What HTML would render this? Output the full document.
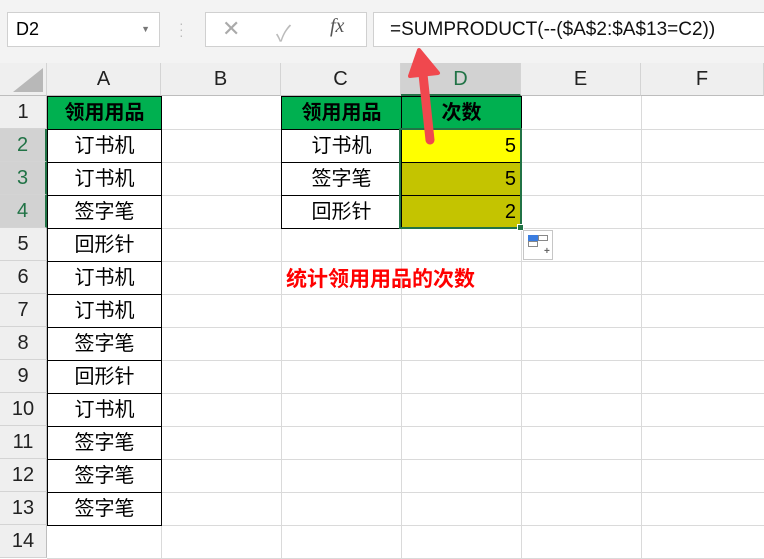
<!DOCTYPE html><html><head><meta charset="utf-8"><style>
body{margin:0;width:764px;height:559px;overflow:hidden;background:#fff;font-family:"Liberation Sans","Noto Sans CJK SC",sans-serif;position:relative}
div{position:absolute;box-sizing:border-box}
.top{left:0;top:0;width:764px;height:63px;background:#f3f3f3}
.ch{top:63px;height:33px;background:#efefef;border-right:1px solid #d4d4d4;border-bottom:1px solid #bdbdbd;font-size:20px;text-align:center;line-height:33px;color:#222}
.rh{left:0;width:47px;height:33px;background:#efefef;border-bottom:1px solid #d4d4d4;border-right:1px solid #bdbdbd;font-size:20px;text-align:center;line-height:33px;color:#222}
.gv{top:96px;width:1px;height:463px;background:#dadada}
.gh{left:47px;width:717px;height:1px;background:#dadada}
.c{height:34px;border:1px solid #000;font-size:20px;text-align:center;line-height:32px;color:#000}
.h{background:#00b050;font-weight:bold}
</style></head><body>
<div class="top"></div>
<div style="left:7px;top:12px;width:153px;height:35px;background:#fff;border:1px solid #d0d0d0;font-size:18px;line-height:33px;padding-left:8px">D2<span style="position:absolute;right:9px;top:0;font-size:9px;color:#777">▼</span></div>
<div style="left:179px;top:20px;color:#bbb;font-size:14px;line-height:6px">·<br>·<br>·</div>
<div style="left:205px;top:12px;width:162px;height:35px;background:#fff;border:1px solid #d0d0d0"></div>
<div style="left:222px;top:16px;font-size:22px;color:#aaa">✕</div>
<div style="left:276px;top:16px;font-size:22px;color:#bbb">✓</div>
<div style="left:330px;top:15px;font-size:20px;color:#555;font-style:italic;font-family:'Liberation Serif',serif">fx</div>
<div style="left:373px;top:12px;width:400px;height:35px;background:#fff;border:1px solid #d0d0d0;font-size:19px;line-height:33px;padding-left:16px;color:#111">=SUMPRODUCT(--($A$2:$A$13=C2))</div>
<div class="ch" style="left:0;width:47px"></div>
<div style="left:13px;top:68px;width:0;height:0;border-left:30px solid transparent;border-bottom:24px solid #b8b8b8"></div>
<div class="ch" style="left:47px;width:114px">A</div>
<div class="ch" style="left:161px;width:120px">B</div>
<div class="ch" style="left:281px;width:120px">C</div>
<div class="ch" style="left:401px;width:120px;background:#d2d2d2;border-bottom:2px solid #217346;color:#217346">D</div>
<div class="ch" style="left:521px;width:120px">E</div>
<div class="ch" style="left:641px;width:123px">F</div>
<div class="rh" style="top:96px">1</div>
<div class="rh" style="top:129px;background:#d2d2d2;color:#217346;border-right:2px solid #217346">2</div>
<div class="rh" style="top:162px;background:#d2d2d2;color:#217346;border-right:2px solid #217346">3</div>
<div class="rh" style="top:195px;background:#d2d2d2;color:#217346;border-right:2px solid #217346">4</div>
<div class="rh" style="top:228px">5</div><div class="rh" style="top:261px">6</div><div class="rh" style="top:294px">7</div><div class="rh" style="top:327px">8</div><div class="rh" style="top:360px">9</div><div class="rh" style="top:393px">10</div><div class="rh" style="top:426px">11</div><div class="rh" style="top:459px">12</div><div class="rh" style="top:492px">13</div><div class="rh" style="top:525px">14</div>
<div class="gv" style="left:161px"></div><div class="gv" style="left:281px"></div><div class="gv" style="left:401px"></div><div class="gv" style="left:521px"></div><div class="gv" style="left:641px"></div>
<div class="gh" style="top:129px"></div><div class="gh" style="top:162px"></div><div class="gh" style="top:195px"></div><div class="gh" style="top:228px"></div><div class="gh" style="top:261px"></div><div class="gh" style="top:294px"></div><div class="gh" style="top:327px"></div><div class="gh" style="top:360px"></div><div class="gh" style="top:393px"></div><div class="gh" style="top:426px"></div><div class="gh" style="top:459px"></div><div class="gh" style="top:492px"></div><div class="gh" style="top:525px"></div><div class="gh" style="top:558px"></div>
<div class="c h" style="left:47px;top:96px;width:115px">领用用品</div>
<div class="c" style="left:47px;top:129px;width:115px">订书机</div>
<div class="c" style="left:47px;top:162px;width:115px">订书机</div>
<div class="c" style="left:47px;top:195px;width:115px">签字笔</div>
<div class="c" style="left:47px;top:228px;width:115px">回形针</div>
<div class="c" style="left:47px;top:261px;width:115px">订书机</div>
<div class="c" style="left:47px;top:294px;width:115px">订书机</div>
<div class="c" style="left:47px;top:327px;width:115px">签字笔</div>
<div class="c" style="left:47px;top:360px;width:115px">回形针</div>
<div class="c" style="left:47px;top:393px;width:115px">订书机</div>
<div class="c" style="left:47px;top:426px;width:115px">签字笔</div>
<div class="c" style="left:47px;top:459px;width:115px">签字笔</div>
<div class="c" style="left:47px;top:492px;width:115px">签字笔</div>
<div class="c h" style="left:281px;top:96px;width:121px">领用用品</div>
<div class="c h" style="left:401px;top:96px;width:121px">次数</div>
<div class="c" style="left:281px;top:129px;width:121px">订书机</div>
<div class="c" style="left:281px;top:162px;width:121px">签字笔</div>
<div class="c" style="left:281px;top:195px;width:121px">回形针</div>
<div class="c" style="left:401px;top:129px;width:121px;background:#ffff00;text-align:right;padding-right:5px">5</div>
<div class="c" style="left:401px;top:162px;width:121px;background:#c4c400;text-align:right;padding-right:5px">5</div>
<div class="c" style="left:401px;top:195px;width:121px;background:#c4c400;text-align:right;padding-right:5px">2</div>
<div style="left:399px;top:128px;width:123px;height:101px;border:2px solid #217346"></div>
<div style="left:517px;top:224px;width:7px;height:7px;background:#217346;border:1px solid #fff"></div>
<div style="left:523px;top:230px;width:30px;height:30px;background:#fff;border:1px solid #c6c6c6"></div>
<div style="left:528px;top:235px;width:10px;height:6px;background:#3b7de0"></div>
<div style="left:538px;top:235px;width:10px;height:6px;border:1px solid #888"></div>
<div style="left:528px;top:241px;width:10px;height:6px;border:1px solid #888"></div>
<div style="left:544px;top:246px;font-size:10px;color:#666;font-weight:bold">+</div>
<div style="left:286px;top:263px;font-size:21px;font-weight:bold;color:#ff0000">统计领用用品的次数</div>
<svg style="position:absolute;left:400px;top:40px" width="60" height="110"><path d="M22 25 L30 100" stroke="#f0484e" stroke-width="9" stroke-linecap="round"/><path d="M10 36 L19 10 L38 33 Z" fill="#f0484e" stroke="#f0484e" stroke-width="4" stroke-linejoin="round"/></svg>
</body></html>
